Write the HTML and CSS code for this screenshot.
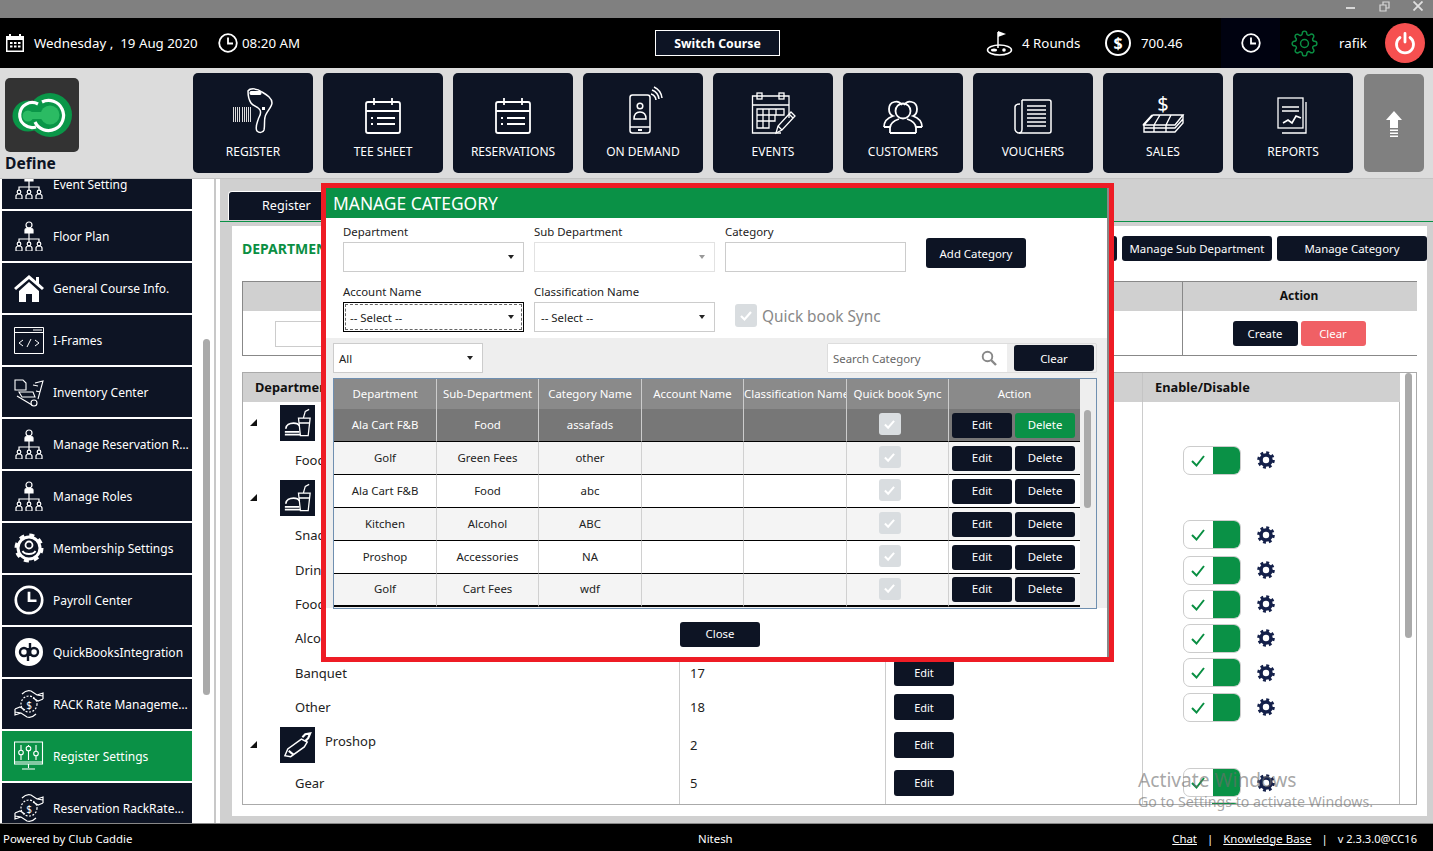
FILE: index.html
```html
<!DOCTYPE html>
<html lang="en">
<head>
<meta charset="utf-8">
<title>Manage Category</title>
<link rel="stylesheet" href="styles.css">
</head>
<body>
<svg class="defs" width="0" height="0" aria-hidden="true">
  <symbol id="org" viewBox="0 0 30 30">
    <g fill="none" stroke="#fff" stroke-width="1.200">
      <circle cx="15" cy="4" r="3"/><path d="M11 12v-3c0-1.500 2-2 4-2s4 .5 4 2v3z" fill="#fff"/>
      <path d="M15 12v6M5 21v-3h20v3M15 18v3"/>
      <circle cx="5" cy="23" r="1.800"/><path d="M2 30v-3c0-1 1-2 3-2s3 1 3 2v3z"/>
      <circle cx="15" cy="23" r="1.800"/><path d="M12 30v-3c0-1 1-2 3-2s3 1 3 2v3z"/>
      <circle cx="25" cy="23" r="1.800"/><path d="M22 30v-3c0-1 1-2 3-2s3 1 3 2v3z"/>
    </g>
  </symbol>
  <symbol id="hands" viewBox="0 0 30 30">
    <g fill="none" stroke="#fff" stroke-width="1.200">
      <circle cx="15" cy="15" r="8" stroke-dasharray="2 1.500"/>
      <path d="M8 5c3-3 6-4 9-3l6 4 6 1M23 6l6-2v6M22 25c-3 3-6 4-9 3l-6-4-6-1M7 24l-6 2v-6M1 20l5-2 5 3M29 10l-5 2-5-3"/>
    </g>
    <text x="15" y="20" class="svgdollar">$</text>
  </symbol>
  <symbol id="gearfill" viewBox="0 0 18 18">
    <circle cx="9" cy="9" r="5" fill="none" stroke="#14204a" stroke-width="3.600"/>
    <circle cx="9" cy="9" r="7.200" fill="none" stroke="#14204a" stroke-width="3.200" stroke-dasharray="2.800 2.850"/>
  </symbol>
  <symbol id="food" viewBox="0 0 36 36">
    <g fill="none" stroke="#fff" stroke-width="1.300">
      <path d="M19 13h12l-2 18h-8zM24 13l2-7 4-2M19 18h11"/>
      <path d="M6 24c0-4 4-6 8-6s5 1 6 3M5 27h15M5 30h16" stroke-width="1.800"/>
    </g>
  </symbol>
  <symbol id="clock" viewBox="0 0 20 20">
    <circle cx="10" cy="10" r="8.800" fill="none" stroke="#fff" stroke-width="1.800"/>
    <path d="M10 4.500V10.500H15" fill="none" stroke="#fff" stroke-width="1.800"/>
  </symbol>
  <symbol id="calsheet" viewBox="0 0 60 50">
    <g fill="none" stroke="#fff" stroke-width="1.800">
      <rect x="13" y="16" width="34" height="31" rx="2"/>
      <path d="M13 25h34M21 12v7M39 12v7"/>
      <path d="M24 32h18M24 38h18M18 32h2M18 38h2"/>
    </g>
  </symbol>
</svg>

<div class="titlebar">
  <span class="win-min"></span>
  <svg class="win-restore" width="11" height="11" viewBox="0 0 11 11"><path d="M1 4h6v6H1zM4 4V1h6v6H7" fill="none" stroke="#d8d8d8" stroke-width="1.200"/></svg>
  <svg class="win-close" width="10" height="10" viewBox="0 0 10 10"><path d="M.5.5l9 9M9.500.5l-9 9" stroke="#e0e0e0" stroke-width="1.800"/></svg>
</div>

<header class="topbar">
  <svg class="ic-cal" width="20" height="20" viewBox="0 0 20 20"><path fill="#fff" d="M1 3h3V1h2v2h8V1h2v2h3v16H1z"/><path fill="#000" d="M2.500 7h15v10.500h-15z"/><path fill="#fff" d="M5 9h2.500v2H5zM9 9h2.500v2H9zM13 9h2.500v2H13zM5 12.500h2.500v2H5zM9 12.500h2.500v2H9zM13 12.500h2.500v2H13z"/></svg>
  <span class="date">Wednesday ,&nbsp; 19 Aug 2020</span>
  <svg class="ic-clock" width="20" height="20"><use href="#clock"/></svg>
  <span class="time">08:20 AM</span>
  <button class="switch">Switch Course</button>
  <svg class="ic-golf" width="27" height="26" viewBox="0 0 27 26"><g fill="none" stroke="#fff" stroke-width="1.500"><path d="M12 18V2"/><ellipse cx="13.500" cy="20" rx="12" ry="5"/></g><path d="M12 1l8 3-8 3z" fill="#fff"/><ellipse cx="8" cy="20" rx="3" ry="1.500" fill="#fff"/><circle cx="18" cy="20" r="1.800" fill="#fff"/></svg>
  <span class="rounds">4 Rounds</span>
  <span class="dollar">$</span>
  <span class="amount">700.46</span>
  <div class="clockbox"><svg width="20" height="20"><use href="#clock"/></svg></div>
  <svg class="ic-gear" width="27" height="27" viewBox="0 0 24 24"><g fill="none" stroke="#0a8f43" stroke-width="1.300"><circle cx="12" cy="12" r="3.500"/><path d="M19.400 15a1.650 1.650 0 0 0 .33 1.820l.06.06a2 2 0 0 1 0 2.830 2 2 0 0 1-2.830 0l-.06-.06a1.650 1.650 0 0 0-1.820-.33 1.650 1.650 0 0 0-1 1.510V21a2 2 0 0 1-2 2 2 2 0 0 1-2-2v-.09A1.650 1.650 0 0 0 9 19.400a1.650 1.650 0 0 0-1.820.33l-.06.06a2 2 0 0 1-2.830 0 2 2 0 0 1 0-2.830l.06-.06a1.650 1.650 0 0 0 .33-1.820 1.650 1.650 0 0 0-1.510-1H3a2 2 0 0 1-2-2 2 2 0 0 1 2-2h.09A1.650 1.650 0 0 0 4.600 9a1.650 1.650 0 0 0-.33-1.820l-.06-.06a2 2 0 0 1 0-2.830 2 2 0 0 1 2.830 0l.06.06a1.650 1.650 0 0 0 1.820.33H9a1.650 1.650 0 0 0 1-1.510V3a2 2 0 0 1 2-2 2 2 0 0 1 2 2v.09a1.650 1.650 0 0 0 1 1.510 1.650 1.650 0 0 0 1.820-.33l.06-.06a2 2 0 0 1 2.830 0 2 2 0 0 1 0 2.830l-.06.06a1.650 1.650 0 0 0-.33 1.820V9a1.650 1.650 0 0 0 1.510 1H21a2 2 0 0 1 2 2 2 2 0 0 1-2 2h-.09a1.650 1.650 0 0 0-1.510 1z"/></g></svg>
  <span class="user">rafik</span>
  <div class="power"><svg width="24" height="24" viewBox="0 0 24 24"><path d="M7 6.500a8.500 8.500 0 1 0 10 0M12 2.500V11" fill="none" stroke="#fff" stroke-width="2.800" stroke-linecap="round"/></svg></div>
</header>

<nav class="nav">
  <div class="brand">
    <div class="logo">
      <svg width="60" height="46" viewBox="0 0 60 46">
        <circle cx="16" cy="24" r="15.500" fill="#0a9648"/>
        <circle cx="38" cy="23" r="22" fill="#0a9648"/>
        <circle cx="38" cy="23" r="9.500" fill="#2bbb63"/><circle cx="16" cy="24" r="5.500" fill="#2bbb63"/><path d="M16 20h20v7H16z" fill="#2bbb63"/>
        <path d="M26 12A12.500 12.500 0 1 0 24 35" fill="none" stroke="#fff" stroke-width="3.200"/>
        <path d="M30 10A15 15 0 1 1 23 30" fill="none" stroke="#fff" stroke-width="3.200"/>
      </svg>
    </div>
    <div class="brand-name">Define</div>
  </div>
  <a class="tile">
    <svg width="60" height="50" viewBox="0 0 60 50"><path d="M10.500 21v15M12.500 21v15M14.500 21v15M16.500 21v15M19.500 21v15M21.500 21v15M23.500 21v15M25.500 21v15M27.500 21v15" stroke="#ddd" stroke-width="1"/><path d="M25 5c2-3 9-3 14 1 5 3 10 6 10 11 0 4-6 9-7 14-1 4 0 9-1 13-1 3-5 3-7 1-2-3 0-8 1-11 1-4 4-6 2-10-1-3-7-4-9-7-2-3-3-8-3-12z" fill="none" stroke="#fff" stroke-width="1.500"/><path d="M28 5h9c2 0 2 4 0 4h-9c-2 0-2-4 0-4zM39 21h3v3h-3z" fill="#fff"/></svg>
    <span>REGISTER</span>
  </a>
  <a class="tile"><svg width="60" height="50"><use href="#calsheet"/></svg><span>TEE SHEET</span></a>
  <a class="tile"><svg width="60" height="50"><use href="#calsheet"/></svg><span>RESERVATIONS</span></a>
  <a class="tile">
    <svg width="60" height="50" viewBox="0 0 60 50"><g fill="none" stroke="#fff" stroke-width="1.500"><rect x="17" y="9" width="20" height="38" rx="2.500"/><path d="M17 41h20"/><circle cx="27" cy="20" r="2.800"/><path d="M21 33c0-4 2-7 6-7s6 3 6 7z"/><path d="M38 8a7 7 0 0 1 5 6M39 4a11 11 0 0 1 7 9M41 1a14 14 0 0 1 8 11"/></g><rect x="25" y="43" width="4" height="2" fill="#fff"/></svg>
    <span>ON DEMAND</span>
  </a>
  <a class="tile">
    <svg width="60" height="50" viewBox="0 0 60 50"><g fill="none" stroke="#fff" stroke-width="1.300"><path d="M38 47H9.500V10H46v22M9.500 19H46"/><rect x="14" y="7" width="5" height="6"/><rect x="36" y="7" width="5" height="6"/><path d="M14 23h27v6H14zM14 29h18v6H14zM14 35h12v7H14zM20 23v19M26 23v12M33 23v6"/><path d="M33 47l2-7 13-14 4 4-13 14zM35 40l4 4M46 28l4 4"/></g></svg>
    <span>EVENTS</span>
  </a>
  <a class="tile">
    <svg width="60" height="50" viewBox="0 0 60 50"><g fill="none" stroke="#fff" stroke-width="1.800"><circle cx="30" cy="25" r="7.500"/><path d="M17 47v-5c0-5 6-8 9-9M43 47v-5c0-5-6-8-9-9M17 47h26M11 41c0-6 3-9 9-11-5-2-6-12 1-14 3-1 6 0 8 3M49 41c0-6-3-9-9-11 5-2 6-12-1-14-3-1-6 0-8 3M11 41h6M43 41h6"/></g></svg>
    <span>CUSTOMERS</span>
  </a>
  <a class="tile">
    <svg width="60" height="50" viewBox="0 0 60 50"><g fill="none" stroke="#fff" stroke-width="1.500"><path d="M19 14h27c1 0 2 1 2 2v29c0 1-1 2-2 2H16c-2 0-4-2-4-4V21c0-2 2-3 5-3"/><path d="M19 14v29c0 2-1 4-3 4"/><path d="M24 20h19M24 24h19M24 28h19M24 32h19M24 36h19M24 40h19"/></g></svg>
    <span>VOUCHERS</span>
  </a>
  <a class="tile">
    <svg width="60" height="50" viewBox="0 0 60 50"><text x="30" y="25" class="svgsales">$</text><g fill="none" stroke="#fff" stroke-width="1.400"><path d="M20 29h30l-8 10H11zM19 29l-9 10M27 29l-6 10M38 29l-5 10"/><path d="M11 39v3h31l8-9v-4M11 42v4h31l8-9v-4M21 39v7M33 39v7"/></g></svg>
    <span>SALES</span>
  </a>
  <a class="tile">
    <svg width="60" height="50" viewBox="0 0 60 50"><g fill="none" stroke="#fff" stroke-width="1.300"><rect x="15" y="12" width="25" height="30"/><path d="M43 16v31H19M19 21h17M19 25h17"/><path d="M20 37l5-3 4 3 4-7 5 2" stroke-width="1.600"/></g></svg>
    <span>REPORTS</span>
  </a>
  <div class="upbtn">
    <svg width="16" height="27" viewBox="0 0 16 27"><path d="M8 0l8 9h-4v8H4V9H0zM4 18.500h8V20H4zM4 21.500h8V23H4zM4 24.500h8V26H4z" fill="#fff"/></svg>
  </div>
</nav>

<div class="content">
  <aside class="sidebar">
    <ul class="menu">
      <li class="mitem"><svg width="30" height="30"><use href="#org"/></svg><span>Event Setting</span></li>
      <li class="mitem"><svg width="30" height="30"><use href="#org"/></svg><span>Floor Plan</span></li>
      <li class="mitem"><svg width="30" height="30" viewBox="0 0 30 30"><path d="M15 2L0 15l2 2L15 6l13 11 2-2-5-4.500V4h-3v4zM5 18v11h7v-8h6v8h7V18L15 9z" fill="#fff"/></svg><span>General Course Info.</span></li>
      <li class="mitem"><svg width="30" height="30" viewBox="0 0 30 30"><g fill="none" stroke="#fff"><path d="M.5 2.500h29v26H.5zM.5 7.500h29M19 5h9" /><path d="M9 15l-4 3 4 3M21 15l4 3-4 3M17 14l-4 8"/></g></svg><span>I-Frames</span></li>
      <li class="mitem"><svg width="30" height="30" viewBox="0 0 30 30"><g fill="none" stroke="#fff" stroke-width="1.100"><path d="M1 3h8l3 3v7H1zM5 15h14l2 5H8zM3 19l15 9M21 6l8-2-5 18M19 8l5 1M22 14l4 1"/><circle cx="20" cy="26" r="3"/></g></svg><span>Inventory Center</span></li>
      <li class="mitem"><svg width="30" height="30"><use href="#org"/></svg><span>Manage Reservation Rules</span></li>
      <li class="mitem"><svg width="30" height="30"><use href="#org"/></svg><span>Manage Roles</span></li>
      <li class="mitem"><svg width="30" height="30" viewBox="0 0 30 30"><circle cx="15" cy="15" r="11" fill="none" stroke="#fff" stroke-width="3"/><circle cx="15" cy="15" r="13" fill="none" stroke="#fff" stroke-width="3" stroke-dasharray="5 5.200"/><circle cx="15" cy="12" r="3.500" fill="none" stroke="#fff" stroke-width="1.800"/><path d="M8.500 18c2 4 11 4 13 0" fill="none" stroke="#fff" stroke-width="1.800"/></svg><span>Membership Settings</span></li>
      <li class="mitem"><svg width="30" height="30"><use href="#clock"/></svg><span>Payroll Center</span></li>
      <li class="mitem"><svg width="30" height="30" viewBox="0 0 30 30"><circle cx="15" cy="15" r="14" fill="#fff"/><g fill="none" stroke="#0d1424" stroke-width="2.400"><circle cx="10" cy="15" r="4"/><circle cx="20" cy="15" r="4"/><path d="M14 11v13M16 6v13"/></g></svg><span>QuickBooksIntegration</span></li>
      <li class="mitem"><svg width="30" height="30"><use href="#hands"/></svg><span>RACK Rate Management</span></li>
      <li class="mitem active"><svg width="30" height="30" viewBox="0 0 30 30"><g fill="none" stroke="#fff" stroke-width="1.100"><path d="M.5 1h28v22H.5zM.5 21h28M14.500 23v4M8 28h13"/><path d="M7 4v5M7 14v5M14.500 4v1M14.500 10v9M22 4v6M22 15v4"/><circle cx="7" cy="11.500" r="2.300"/><circle cx="14.500" cy="7.500" r="2.300"/><circle cx="22" cy="12.500" r="2.300"/></g></svg><span>Register Settings</span></li>
      <li class="mitem"><svg width="30" height="30"><use href="#hands"/></svg><span>Reservation RackRateSetup</span></li>
    </ul>
    <div class="side-scroll"><div class="side-thumb"></div></div>
  </aside>

  <main class="main">
    <div class="tabs"><div class="tab">Register</div></div>
    <section class="panel">
      <div class="panel-head">
        <h2 class="dept-title">DEPARTMENT</h2>
        <div class="panel-actions">
          <button class="btn wide"></button>
          <button class="btn wide">Manage Sub Department</button>
          <button class="btn wide">Manage Category</button>
        </div>
      </div>

      <div class="form-table">
        <div class="ft-head"><div class="ft-main"></div><div class="ft-action">Action</div></div>
        <div class="ft-body">
          <div class="ft-main"><div class="ft-input"></div></div>
          <div class="ft-action"><button class="btn sm">Create</button><button class="btn sm red">Clear</button></div>
        </div>
      </div>

      <div class="tree-wrap">
        <div class="tree">
          <div class="th">Department</div><div class="th"></div><div class="th"></div><div class="th en">Enable/Disable</div>

          <div class="c dept"><i class="tri"></i><span class="dicon"><svg width="36" height="36"><use href="#food"/></svg></span></div><div class="c"></div><div class="c"></div><div class="c"></div>
          <div class="c name">Food</div><div class="c"></div><div class="c"></div><div class="c tg"><span class="toggle"><svg width="29" height="27" viewBox="0 0 29 27"><path d="M8 14l4.500 4.500L20 9" fill="none" stroke="#0a8f43" stroke-width="2"/></svg><b></b></span><svg class="gear" width="18" height="18"><use href="#gearfill"/></svg></div>

          <div class="c dept"><i class="tri"></i><span class="dicon"><svg width="36" height="36"><use href="#food"/></svg></span></div><div class="c"></div><div class="c"></div><div class="c"></div>
          <div class="c name">Snack</div><div class="c"></div><div class="c"></div><div class="c tg"><span class="toggle"><svg width="29" height="27" viewBox="0 0 29 27"><path d="M8 14l4.500 4.500L20 9" fill="none" stroke="#0a8f43" stroke-width="2"/></svg><b></b></span><svg class="gear" width="18" height="18"><use href="#gearfill"/></svg></div>
          <div class="c name">Drink</div><div class="c"></div><div class="c"></div><div class="c tg"><span class="toggle"><svg width="29" height="27" viewBox="0 0 29 27"><path d="M8 14l4.500 4.500L20 9" fill="none" stroke="#0a8f43" stroke-width="2"/></svg><b></b></span><svg class="gear" width="18" height="18"><use href="#gearfill"/></svg></div>
          <div class="c name">Food</div><div class="c"></div><div class="c"></div><div class="c tg"><span class="toggle"><svg width="29" height="27" viewBox="0 0 29 27"><path d="M8 14l4.500 4.500L20 9" fill="none" stroke="#0a8f43" stroke-width="2"/></svg><b></b></span><svg class="gear" width="18" height="18"><use href="#gearfill"/></svg></div>
          <div class="c name">Alcohol</div><div class="c"></div><div class="c"></div><div class="c tg"><span class="toggle"><svg width="29" height="27" viewBox="0 0 29 27"><path d="M8 14l4.500 4.500L20 9" fill="none" stroke="#0a8f43" stroke-width="2"/></svg><b></b></span><svg class="gear" width="18" height="18"><use href="#gearfill"/></svg></div>
          <div class="c name">Banquet</div><div class="c num">17</div><div class="c ed"><button class="btn edit">Edit</button></div><div class="c tg"><span class="toggle"><svg width="29" height="27" viewBox="0 0 29 27"><path d="M8 14l4.500 4.500L20 9" fill="none" stroke="#0a8f43" stroke-width="2"/></svg><b></b></span><svg class="gear" width="18" height="18"><use href="#gearfill"/></svg></div>
          <div class="c name">Other</div><div class="c num">18</div><div class="c ed"><button class="btn edit">Edit</button></div><div class="c tg"><span class="toggle"><svg width="29" height="27" viewBox="0 0 29 27"><path d="M8 14l4.500 4.500L20 9" fill="none" stroke="#0a8f43" stroke-width="2"/></svg><b></b></span><svg class="gear" width="18" height="18"><use href="#gearfill"/></svg></div>

          <div class="c dept"><i class="tri"></i><span class="dicon"><svg width="36" height="36" viewBox="0 0 36 36"><g fill="none" stroke="#fff" stroke-width="1.500"><path d="M5 29l3-7 14-10 6 3-3 5-14 10z"/><path d="M9 24l5 4M23 10l3-3 5-1-2 5-3 3" stroke-width="2.200"/></g></svg></span><span class="dlabel">Proshop</span></div><div class="c num">2</div><div class="c ed"><button class="btn edit">Edit</button></div><div class="c"></div>
          <div class="c name">Gear</div><div class="c num">5</div><div class="c ed"><button class="btn edit">Edit</button></div><div class="c tg"><span class="toggle"><svg width="29" height="27" viewBox="0 0 29 27"><path d="M8 14l4.500 4.500L20 9" fill="none" stroke="#0a8f43" stroke-width="2"/></svg><b></b></span><svg class="gear" width="18" height="18"><use href="#gearfill"/></svg></div>
          <div class="c"></div><div class="c"></div><div class="c ed top"><button class="btn edit"></button></div><div class="c tg toptg"><span class="toggle"><b></b></span></div>
        </div>
        <div class="tree-scroll"><div class="tree-thumb"></div></div>
      </div>
    </section>
  </main>
</div>

<footer class="footer">
  <div>Powered by Club Caddie</div>
  <div class="f-mid">Nitesh</div>
  <div class="f-right"><a>Chat</a><span>|</span><a>Knowledge Base</a><span>|</span><em>v 2.3.3.0@CC16</em></div>
</footer>

<div class="modal">
  <div class="m-head">MANAGE CATEGORY</div>
  <div class="m-form">
    <div class="m-row">
      <label class="fld">Department<span class="sel"><i class="caret"></i></span></label>
      <label class="fld">Sub Department<span class="sel dim"><i class="caret"></i></span></label>
      <label class="fld">Category<span class="sel plain"></span></label>
      <button class="btn add">Add Category</button>
    </div>
    <div class="m-row">
      <label class="fld">Account Name<span class="sel focus"><em>-- Select --</em><i class="caret"></i></span></label>
      <label class="fld">Classification Name<span class="sel"><em>-- Select --</em><i class="caret"></i></span></label>
      <div class="qb"><span class="cbox big"><svg width="14" height="12" viewBox="0 0 14 12"><path d="M2 6l3.500 3.500L12 2" fill="none" stroke="#fff" stroke-width="2.200"/></svg></span><span class="qb-text">Quick book Sync</span></div>
    </div>
  </div>
  <div class="m-grid">
    <div class="g-tools">
      <span class="sel all"><em>All</em><i class="caret"></i></span>
      <div class="search">
        <span class="s-field">Search Category<svg width="16" height="16" viewBox="0 0 16 16"><circle cx="6.500" cy="6.500" r="4.800" fill="none" stroke="#888" stroke-width="1.900"/><path d="M10 10l5 5" stroke="#888" stroke-width="2.400"/></svg></span>
        <button class="btn clear">Clear</button>
      </div>
    </div>
    <div class="g-wrap">
      <table class="g-table">
        <thead>
          <tr><th>Department</th><th>Sub-Department</th><th>Category Name</th><th>Account Name</th><th>Classification Name</th><th>Quick book Sync</th><th class="last">Action</th></tr>
        </thead>
        <tbody>
          <tr class="sel-row"><td>Ala Cart F&amp;B</td><td>Food</td><td>assafads</td><td></td><td></td><td><span class="cbox row"><svg width="13" height="11" viewBox="0 0 14 12"><path d="M2 6l3.500 3.500L12 2" fill="none" stroke="#fff" stroke-width="2.200"/></svg></span></td><td class="last"><div class="acts"><button class="btn act">Edit</button><button class="btn act green">Delete</button></div></td></tr>
          <tr><td>Golf</td><td>Green Fees</td><td>other</td><td></td><td></td><td><span class="cbox row"><svg width="13" height="11" viewBox="0 0 14 12"><path d="M2 6l3.500 3.500L12 2" fill="none" stroke="#fff" stroke-width="2.200"/></svg></span></td><td class="last"><div class="acts"><button class="btn act">Edit</button><button class="btn act">Delete</button></div></td></tr>
          <tr><td>Ala Cart F&amp;B</td><td>Food</td><td>abc</td><td></td><td></td><td><span class="cbox row"><svg width="13" height="11" viewBox="0 0 14 12"><path d="M2 6l3.500 3.500L12 2" fill="none" stroke="#fff" stroke-width="2.200"/></svg></span></td><td class="last"><div class="acts"><button class="btn act">Edit</button><button class="btn act">Delete</button></div></td></tr>
          <tr><td>Kitchen</td><td>Alcohol</td><td>ABC</td><td></td><td></td><td><span class="cbox row"><svg width="13" height="11" viewBox="0 0 14 12"><path d="M2 6l3.500 3.500L12 2" fill="none" stroke="#fff" stroke-width="2.200"/></svg></span></td><td class="last"><div class="acts"><button class="btn act">Edit</button><button class="btn act">Delete</button></div></td></tr>
          <tr><td>Proshop</td><td>Accessories</td><td>NA</td><td></td><td></td><td><span class="cbox row"><svg width="13" height="11" viewBox="0 0 14 12"><path d="M2 6l3.500 3.500L12 2" fill="none" stroke="#fff" stroke-width="2.200"/></svg></span></td><td class="last"><div class="acts"><button class="btn act">Edit</button><button class="btn act">Delete</button></div></td></tr>
          <tr><td>Golf</td><td>Cart Fees</td><td>wdf</td><td></td><td></td><td><span class="cbox row"><svg width="13" height="11" viewBox="0 0 14 12"><path d="M2 6l3.500 3.500L12 2" fill="none" stroke="#fff" stroke-width="2.200"/></svg></span></td><td class="last"><div class="acts"><button class="btn act">Edit</button><button class="btn act">Delete</button></div></td></tr>
        </tbody>
      </table>
      <div class="g-scroll"><div class="g-thumb"></div></div>
    </div>
  </div>
  <div class="m-foot"><button class="btn close">Close</button></div>
</div>

<div class="activate">
  <div class="a1">Activate Windows</div>
  <div class="a2">Go to Settings to activate Windows.</div>
</div>
</body>
</html>
```

FILE: styles.css
```css
* { box-sizing: border-box; }
html, body { margin: 0; padding: 0; }
body {
  position: relative;
  width: 1433px;
  height: 851px;
  overflow: hidden;
  display: flex;
  flex-direction: column;
  font-family: "Noto Sans", "Open Sans", sans-serif;
  font-size: 11.4px;
  color: #111;
  background: #d0d0d0;
}
.defs { position: absolute; }
button { font-family: inherit; }
em { font-style: normal; }
ul { list-style: none; margin: 0; padding: 0; }
.svgdollar { fill: #fff; font: 10px "Noto Sans", sans-serif; text-anchor: middle; }
.svgsales { fill: #fff; font: 20px "Noto Sans", sans-serif; text-anchor: middle; }

/* title bar */
.titlebar { height: 18px; flex: none; background: #808080; display: flex; align-items: flex-start; }
.win-min { width: 9px; height: 2px; background: #d8d8d8; margin: 7px 0 0 1346px; }
.win-restore { margin: 1px 0 0 24px; }
.win-close { margin: 1px 0 0 23px; }

/* top bar */
.topbar { height: 50px; flex: none; background: #000; color: #fff; display: flex; align-items: center; font-size: 13.3px; position: relative; }
.ic-cal { margin-left: 5px; }
.date { margin-left: 9px; width: 164px; white-space: nowrap; }
.ic-clock { margin-left: 20px; }
.time { margin-left: 4px; width: 59px; white-space: nowrap; }
.switch { margin-left: 354px; width: 125px; height: 26px; background: #0d1424; color: #fff; border: 1px solid #fff; font-size: 12.3px; font-weight: 700; padding: 0; }
.ic-golf { margin-left: 206px; }
.rounds { margin-left: 9px; width: 58px; white-space: nowrap; }
.dollar { margin-left: 25px; width: 26px; height: 26px; border: 2px solid #fff; border-radius: 50%; font-size: 16px; font-weight: 700; display: flex; align-items: center; justify-content: center; }
.amount { margin-left: 10px; width: 40px; }
.clockbox { margin-left: 40px; width: 59px; height: 50px; background: #000210; display: flex; align-items: center; justify-content: center; }
.ic-gear { margin-left: 11px; }
.user { margin-left: 21px; width: 27px; }
.power { margin-left: 19px; width: 40px; height: 40px; border-radius: 50%; background: #f65050; display: flex; align-items: center; justify-content: center; }

/* nav */
.nav { height: 111px; flex: none; background: #dcdcdc; display: flex; gap: 10px; padding: 5px 0 0 0; border-bottom: 1px solid #c4c4c4; position: relative; }
.brand { width: 183px; padding-left: 5px; padding-top: 5px; }
.logo { width: 74px; height: 74px; background: #333; border-radius: 5px; display: flex; align-items: center; justify-content: center; }
.brand-name { font-size: 15.6px; font-weight: 700; color: #0d1424; line-height: 22px; margin: 0; }
.tile { width: 120px; height: 100px; background: #0d1424; border-radius: 5px; color: #fff; display: flex; flex-direction: column; align-items: center; padding-top: 13px; }
.tile span { margin-top: 7px; line-height: 18px; font-size: 12px; }
.upbtn { width: 60px; height: 98px; margin: 1px 0 0 1px; background: #808080; border-radius: 5px; display: flex; align-items: center; justify-content: center; padding-top: 2px; }

/* content */
.content { flex: 1; display: flex; min-height: 0; }
.sidebar { width: 220px; flex: none; background: #fff; display: flex; overflow: hidden; border-right: 4px solid #fff; position: relative; }
.menu { width: 190px; margin: -20px 0 0 2px; flex: none; display: flex; flex-direction: column; gap: 2px; }
.mitem { height: 50px; flex: none; background: #0d1424; color: #fff; display: flex; align-items: center; padding-left: 12px; gap: 9px; font-size: 12px; }
.mitem svg { flex: none; }
.mitem span { overflow: hidden; white-space: nowrap; text-overflow: ellipsis; width: 137px; }
.mitem.active { background: #0a9146; }
.side-scroll { width: 24px; border-right: 2px solid #c8c8c8; padding: 160px 0 0 11px; flex: none; }
.side-thumb { width: 7px; height: 356px; background: #aaa; border-radius: 4px; }

/* main */
.main { flex: 1; min-width: 0; background: #d0d0d0; padding-top: 12px; display: flex; flex-direction: column; }
.tabs { margin-bottom: 4px; border-bottom: 1px solid #0a9146; flex: none; padding: 0 0 0 8px; height: 31px; }
.tab { width: 118px; height: 29px; background: #0d1424; color: #fff; border-radius: 4px 4px 0 0; border: 1px solid #fff; border-bottom: 0; padding-left: 33px; line-height: 28px; font-size: 12.6px; }
.panel { background: #fff; margin-left: 12px; width: 1195px; height: 590px; padding: 10px 0 0 10px; overflow: hidden; flex: none; }
.panel-head { height: 25px; display: flex; justify-content: space-between; align-items: center; }
.dept-title { margin: 0; font-size: 14px; font-weight: 700; color: #0a8f43; }
.panel-actions { display: flex; gap: 5px; }
.btn { background: #0d1424; color: #fff; border: 0; border-radius: 3px; font-size: 11.4px; padding: 0; }
.btn.wide { width: 150px; height: 25px; }

.form-table { margin: 20px 10px 0 0; height: 75px; border: 1px solid #888; border-right: 0; }
.ft-head { height: 29px; background: #d0d0d0; display: flex; font-weight: 700; line-height: 27px; font-size: 12px; }
.ft-body { height: 44px; display: flex; }
.ft-main { width: 940px; border-right: 1px solid #888; }
.ft-action { flex: 1; text-align: center; padding-right: 2px; }
.ft-body .ft-action { display: flex; justify-content: center; gap: 3px; padding-top: 10px; }
.ft-input { margin: 10px 0 0 32px; width: 300px; height: 26px; border: 1px solid #ccc; }
.btn.sm { width: 65px; height: 25px; padding-bottom: 1px; }
.btn.red { background: #f06065; }

.tree-wrap { margin: 16px 10px 0 0; height: 433px; border: 1px solid #aaa; display: flex; overflow: hidden; }
.tree { width: 1157px; flex: none; display: grid; grid-template-columns: 437px 206px 257px 257px; grid-template-rows: 29px 40px 36px 38px 37px 34px 34px 34px 35px 34px 41px 35px 30px; }
.th { background: #d0d0d0; font-weight: 700; font-size: 12.8px; padding: 0 0 0 12px; line-height: 29px; }
.th.en { border-left: 1px solid #c4c4c4; margin-left: -1px; }
.c { display: flex; align-items: center; border-right: 1px solid #ccc; font-size: 13px; color: #222; }
.c:nth-child(4n) { border-right: 1px solid #bbb; }
.name { padding-left: 52px; }
.num { padding-left: 10px; }
.dept { padding-left: 7px; }
.tri { width: 0; height: 0; border-style: solid; border-width: 0 0 7px 7px; border-color: transparent transparent #111 transparent; margin-right: 23px; }
.dicon { width: 35px; height: 36px; margin-top: 1px; background: #0d1424; display: flex; align-items: center; justify-content: center; }
.dlabel { margin: -7px 0 0 10px; }
.ed { padding-left: 8px; }
.btn.edit { width: 60px; height: 26px; font-size: 11px; }
.tg { padding-left: 40px; }
.top { align-items: flex-start; padding-top: 5px; }
.toptg { align-items: flex-start; padding-top: 2px; }
.toggle { width: 58px; height: 29px; border: 1px solid #ccc; border-radius: 7px; background: #fff; display: flex; overflow: hidden; flex: none; }
.toggle svg { flex: none; width: 29px; }
.toptg .toggle b { margin-left: 28px; }
.toggle b { flex: 1; background: #0a9146; margin: -1px -1px -1px 0; }
.gear { margin-left: 16px; flex: none; }
.tree-scroll { flex: 1; padding-left: 5px; }
.tree-thumb { width: 7px; height: 265px; background: #aaa; border-radius: 4px; }

/* footer */
.footer { height: 28px; flex: none; background: #000; color: #fff; display: grid; grid-template-columns: 695px auto 1fr; align-items: center; padding: 2px 16px 0 3px; border-top: 1px solid #888; }
.f-right { display: flex; justify-content: flex-end; gap: 9px; }
.f-right a { text-decoration: underline; }
.f-right span { margin: 0 1px; }
.f-right em { font-size: 11.1px; line-height: 16px; }

/* modal */
.modal { position: absolute; left: 321px; top: 183px; width: 793px; height: 479px; border: 5px solid #ee1c25; background: #fff; display: flex; flex-direction: column; }
.modal::after { content: ""; position: absolute; top: 0; right: 0; bottom: 0; width: 2px; background: #888; }
.m-head { height: 30px; flex: none; background: #0a9146; color: #fff; font-size: 17.4px; line-height: 31px; padding-left: 7px; }
.m-form { height: 120px; flex: none; padding: 6px 0 0 17px; display: flex; flex-direction: column; gap: 12px; }
.m-row { display: flex; gap: 10px; height: 48px; }
.fld { width: 181px; display: flex; flex-direction: column; line-height: 16px; color: #222; }
.sel { position: relative; display: flex; align-items: center; height: 30px; margin-top: 2px; border: 1px solid #ccc; background: #fff; padding: 1px 0 0 6px; color: #222; }
.sel em { line-height: 28px; }
.sel .caret { position: absolute; right: 9px; top: 50%; margin-top: -2px; border-style: solid; border-width: 4px 3px 0 3px; border-color: #222 transparent transparent transparent; }
.sel.dim { border-color: #e2e2e2; }
.sel.dim .caret { border-top-color: #999; }
.sel.focus { border-color: #000; outline: 1px dashed #666; outline-offset: -3px; }
.btn.add { width: 100px; height: 30px; margin: 14px 0 0 10px; }
.qb { display: flex; align-items: center; gap: 5px; margin: 20px 0 0 10px; height: 23px; font-size: 15.4px; color: #888; white-space: nowrap; }
.qb-text { padding-top: 2px; }
.cbox { display: inline-flex; width: 22px; height: 22px; align-items: center; justify-content: center; background: #d9dde0; border-radius: 3px; vertical-align: middle; }
.cbox.big { height: 23px; }
.cbox.row { margin-right: 16px; }
.m-grid { height: 270px; flex: none; background: #eee; padding: 5px 0 0 7px; width: 781px; }
.g-tools { display: flex; justify-content: space-between; height: 30px; width: 764px; }
.sel.all { width: 150px; margin: 0; padding-left: 5px; border-width: 1px; }
.search { width: 270px; height: 30px; display: flex; gap: 7px; align-items: center; border: 1px solid #ddd; border-radius: 2px; background: #eee; }
.s-field { width: 179px; height: 28px; background: #fff; display: flex; align-items: center; justify-content: space-between; padding: 0 10px 0 5px; color: #666; }
.btn.clear { width: 80px; height: 26px; }
.g-wrap { margin-top: 5px; width: 764px; height: 231px; border: 1px solid #6f8fb0; display: flex; overflow: hidden; background: #eee; }
.g-table { width: 746px; flex: none; align-self: flex-start; table-layout: fixed; border-collapse: separate; border-spacing: 0; }
.g-table th { height: 30px; padding: 0 0 2px; width: 102px; background: #8a8a8a; color: #fff; font-weight: 400; border-right: 1px solid #ccc; white-space: nowrap; overflow: hidden; }
.g-table th:nth-child(odd) { width: 103px; }
.g-table th.last { width: 131px; }
.g-table td { height: 33px; padding: 0 0 2px; text-align: center; border-right: 1px solid #d0d0d0; border-bottom: 1px solid #000; background: #fff; color: #222; white-space: nowrap; }
.g-table tbody tr:nth-child(even) td { background: #f4f4f4; }
.g-table tbody tr:last-child td { border-bottom-width: 2px; }
.g-table .last { border-right: 0; }
.g-table .sel-row td { background: #777; color: #fff; border-right-color: #ccc; }
.g-table td.last { padding-bottom: 0; }
.acts { display: flex; gap: 3px; padding-left: 3px; align-items: center; }
.btn.act { width: 60px; height: 25px; padding-bottom: 2px; }
.btn.green { background: #0a9146; }
.g-scroll { flex: 1; padding: 31px 0 0 4px; }
.g-thumb { width: 7px; height: 98px; background: #aaa; border-radius: 4px; }
.m-foot { flex: 1; padding: 14px 0 0 354px; }
.btn.close { width: 80px; height: 25px; padding-bottom: 2px; }

/* watermark */
.activate { position: absolute; left: 1138px; top: 766px; color: rgba(110,110,110,.62); white-space: nowrap; pointer-events: none; }
.a1 { font-size: 19.2px; line-height: 28px; }
.a2 { font-size: 14.2px; line-height: 20px; margin-top: -2px; }
```
